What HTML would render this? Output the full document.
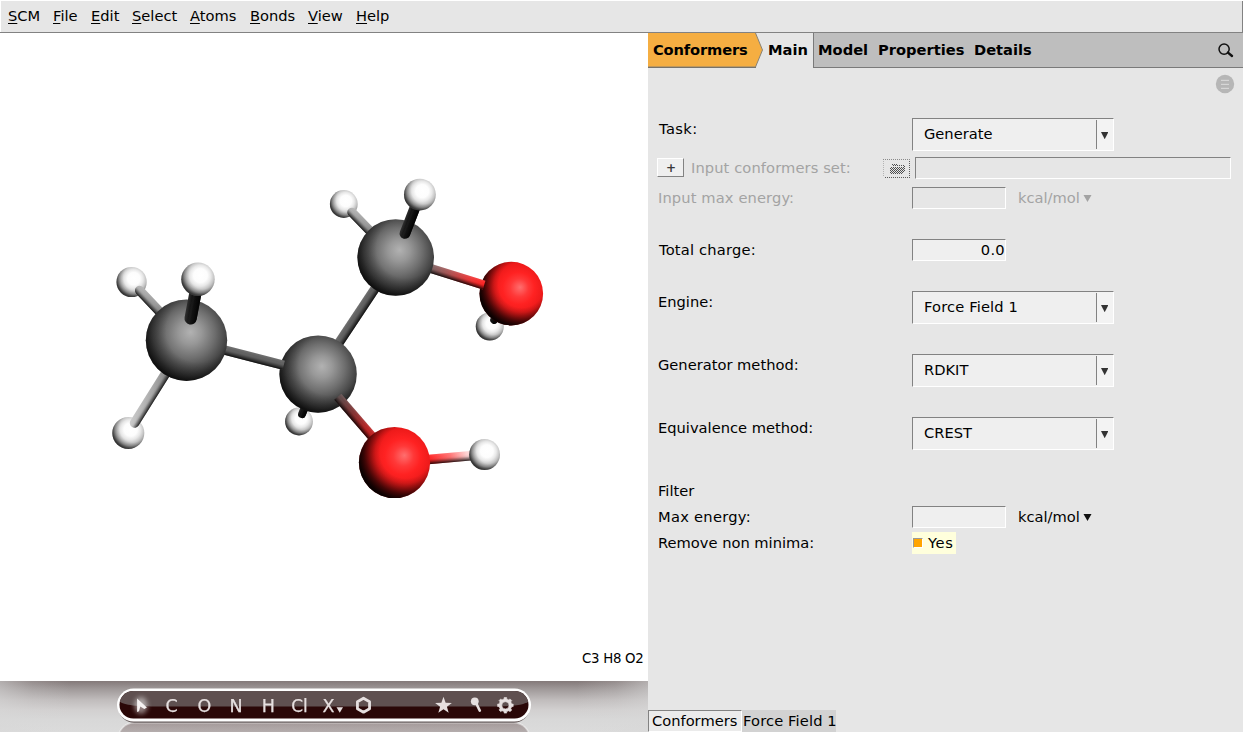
<!DOCTYPE html>
<html><head><meta charset="utf-8"><title>AMSinput</title>
<style>
html,body{margin:0;padding:0;}
body{width:1243px;height:732px;position:relative;overflow:hidden;background:#e6e6e6;font-family:"DejaVu Sans","Liberation Sans",sans-serif;font-size:14.667px;color:#000;}
.abs{position:absolute;white-space:nowrap;}
#menubar{left:0;top:0;width:1243px;height:32px;background:#e6e6e6;border-bottom:1px solid #828282;box-sizing:content-box;}
#menubar:before{content:"";position:absolute;left:0;top:0;width:1243px;height:1px;background:#fff;}
#menubar:after{content:"";position:absolute;left:0;top:0;width:1px;height:32px;background:#fff;}
#mbr{left:1242px;top:1px;width:1px;height:32px;background:#828282;}
.mi{position:absolute;top:7px;line-height:17px;}
.mi u{text-decoration:underline;text-underline-offset:2px;}
#canvas{left:0;top:33px;width:648px;height:648px;background:#fff;}
#tbar{left:0;top:681px;width:648px;height:51px;background:linear-gradient(#837979 0%,#a39d9d 18%,#c0bcbc 37%,#d2d0d0 57%,#d8d8d8 76%,#dbdbdb 100%);}
#panel{left:648px;top:33px;width:595px;height:699px;background:#e6e6e6;}
.lbl{position:absolute;line-height:17px;white-space:nowrap;}
.dis{color:#a3a3a3;}
.b{font-weight:bold;}

.combo{position:absolute;left:912px;width:202px;height:33px;box-sizing:border-box;background:#efefef;border-top:1px solid #828282;border-left:1px solid #828282;border-right:1px solid #fff;border-bottom:1px solid #fff;}
.combo span{position:absolute;left:11px;top:6px;line-height:17px;white-space:nowrap;}
.combo:after{content:"";position:absolute;left:184px;top:0;width:16px;height:31px;background:#f3f3f3;}
.combo b{z-index:2;}
.combo i{position:absolute;left:183px;top:1px;width:1px;height:29px;background:#828282;}
.combo b{position:absolute;left:188px;top:13px;width:7.4px;height:7.2px;background:#333;clip-path:polygon(0 0,100% 0,50% 100%);}
.entry{position:absolute;box-sizing:border-box;background:#efefef;border-top:1px solid #828282;border-left:1px solid #828282;border-right:1px solid #fff;border-bottom:1px solid #fff;}
.dise{background:#e6e6e6;}
.btn{box-sizing:border-box;background:#efefef;border-top:1px solid #fff;border-left:1px solid #fff;border-right:1px solid #828282;border-bottom:1px solid #828282;}
.btn span{position:absolute;left:0;right:0;top:1px;text-align:center;font-weight:bold;line-height:17px;color:#3a3a3a;font-size:12px;padding-left:1px;}
</style></head><body>
<div id="menubar" class="abs">
<span class="mi" style="left:8px"><u>S</u>CM</span>
<span class="mi" style="left:53px"><u>F</u>ile</span>
<span class="mi" style="left:91px"><u>E</u>dit</span>
<span class="mi" style="left:132px"><u>S</u>elect</span>
<span class="mi" style="left:190px"><u>A</u>toms</span>
<span class="mi" style="left:250px"><u>B</u>onds</span>
<span class="mi" style="left:308px"><u>V</u>iew</span>
<span class="mi" style="left:356px"><u>H</u>elp</span>
</div>
<div id="mbr" class="abs"></div>
<div id="canvas" class="abs"></div>
<div id="tbar" class="abs"><div style="position:absolute;left:0;top:0;width:648px;height:51px;background:linear-gradient(to right,rgba(216,216,216,.55) 0,rgba(216,216,216,.2) 5%,rgba(216,216,216,0) 11%,rgba(216,216,216,0) 89%,rgba(216,216,216,.2) 95%,rgba(216,216,216,.55) 100%);"></div></div>
<div id="panel" class="abs"></div>

<!-- tab bar -->
<div class="abs" style="left:648px;top:33px;width:595px;height:34px;background:#bebebe;border-bottom:1px solid #7a7a7a;"></div>
<div class="abs" style="left:648px;top:33px;width:165px;height:35px;background:#e6e6e6;border-right:1px solid #7a7a7a;"></div>
<svg class="abs" style="left:648px;top:33px" width="120" height="35" viewBox="0 0 120 35">
<polygon points="0,0 107.5,0 114.5,17 107.5,34 0,34" fill="#f5ae42"/>
<polyline points="107.5,0 114.5,17 107.5,34 0,34" fill="none" stroke="#8a8374" stroke-width="1"/>
</svg>
<div class="abs" style="left:648px;top:67px;width:108px;height:1px;background:#77736a;"></div>
<span class="lbl b" style="left:653px;top:41px;letter-spacing:-0.15px;">Conformers</span>
<span class="lbl b" style="left:768px;top:41px;">Main</span>
<span class="lbl b" style="left:818px;top:41px;">Model</span>
<span class="lbl b" style="left:878px;top:41px;">Properties</span>
<span class="lbl b" style="left:974px;top:41px;">Details</span>
<svg class="abs" style="left:1213px;top:38px" width="24" height="24" viewBox="0 0 24 24">
<circle cx="11.1" cy="11.1" r="5.1" fill="none" stroke="#111" stroke-width="1.5"/>
<line x1="15" y1="14.6" x2="19" y2="18" stroke="#111" stroke-width="2.4" stroke-linecap="round"/>
</svg>
<svg class="abs" style="left:1214px;top:73px" width="22" height="22" viewBox="0 0 22 22">
<circle cx="11" cy="11" r="9.2" fill="#b6b6b6"/>
<g stroke="#d6d6d6" stroke-width="1.2"><line x1="7" y1="7.4" x2="15" y2="7.4"/><line x1="7" y1="11.4" x2="15" y2="11.4"/><line x1="7" y1="15.4" x2="15" y2="15.4"/></g>
</svg>

<!-- rows -->
<span class="lbl" style="left:659px;top:120px;letter-spacing:0.4px;">Task:</span>
<div class="combo" style="top:118px;"><span>Generate</span><i></i><b></b></div>

<div class="btn abs" style="left:657px;top:158px;width:27px;height:19px;"><span>+</span></div>
<span class="lbl dis" style="left:691px;top:159px;letter-spacing:0.1px;">Input conformers set:</span>
<svg class="abs" style="left:880px;top:156px" width="34" height="26" viewBox="880 156 34 26" shape-rendering="crispEdges">
<defs>
<pattern id="stipA" width="2" height="2" patternUnits="userSpaceOnUse"><rect x="0" y="0" width="1" height="1" fill="#8a8a8a"/><rect x="1" y="1" width="1" height="1" fill="#8a8a8a"/></pattern>
<pattern id="stipB" width="2" height="2" patternUnits="userSpaceOnUse"><rect x="0" y="0" width="1" height="1" fill="#b4b4b4"/><rect x="1" y="1" width="1" height="1" fill="#b4b4b4"/></pattern>
<pattern id="stipC" width="2" height="2" patternUnits="userSpaceOnUse"><rect x="0" y="0" width="1" height="1" fill="#5c5c5c"/><rect x="1" y="1" width="1" height="1" fill="#5c5c5c"/></pattern>
<pattern id="stipD" width="2" height="2" patternUnits="userSpaceOnUse"><rect x="0" y="0" width="1" height="1" fill="#4e4e4e"/><rect x="1" y="1" width="1" height="1" fill="#4e4e4e"/></pattern>
</defs>
<rect x="883" y="159" width="27" height="1" fill="url(#stipA)"/>
<rect x="883" y="160" width="1" height="17" fill="url(#stipB)"/>
<rect x="909" y="160" width="1" height="18" fill="url(#stipC)"/>
<rect x="884" y="177" width="25" height="1" fill="url(#stipC)"/>
<rect x="892" y="164" width="6" height="2" fill="url(#stipD)"/>
<rect x="898" y="165" width="6" height="1" fill="url(#stipD)"/>
<rect x="890" y="167" width="13" height="6" fill="url(#stipD)"/>
<rect x="891" y="173" width="11" height="1" fill="url(#stipD)"/>
<rect x="903" y="166" width="2" height="6" fill="url(#stipD)"/>
</svg>
<div class="entry dise" style="left:915px;top:157px;width:316px;height:22px;"></div>

<span class="lbl dis" style="left:658px;top:189px;letter-spacing:0.12px;">Input max energy:</span>
<div class="entry dise" style="left:912px;top:187px;width:94px;height:22px;"></div>
<span class="lbl dis" style="left:1018px;top:189px;">kcal/mol</span>
<svg class="abs" style="left:1083px;top:194px" width="9" height="9" viewBox="0 0 9 9"><polygon points="0.5,1 8.5,1 4.5,8" fill="#a3a3a3"/></svg>

<span class="lbl" style="left:659px;top:241px;letter-spacing:0.2px;">Total charge:</span>
<div class="entry" style="left:912px;top:239px;width:94px;height:22px;"><span class="lbl" style="right:0px;top:1px;letter-spacing:0.3px;">0.0</span></div>

<span class="lbl" style="left:658px;top:293px;">Engine:</span>
<div class="combo" style="top:291px;"><span style="letter-spacing:0.15px">Force Field 1</span><i></i><b></b></div>

<span class="lbl" style="left:658px;top:356px;">Generator method:</span>
<div class="combo" style="top:354px;"><span>RDKIT</span><i></i><b></b></div>

<span class="lbl" style="left:658px;top:419px;">Equivalence method:</span>
<div class="combo" style="top:417px;"><span>CREST</span><i></i><b></b></div>

<span class="lbl" style="left:658px;top:482px;">Filter</span>
<span class="lbl" style="left:658px;top:508px;letter-spacing:0.27px;">Max energy:</span>
<div class="entry" style="left:912px;top:506px;width:94px;height:22px;"></div>
<span class="lbl" style="left:1018px;top:508px;">kcal/mol</span>
<svg class="abs" style="left:1083px;top:513px" width="9" height="9" viewBox="0 0 9 9"><polygon points="0.5,1 8.5,1 4.5,8" fill="#111"/></svg>
<span class="lbl" style="left:658px;top:534px;">Remove non minima:</span>
<div class="abs" style="left:912px;top:532px;width:44px;height:22px;background:#ffffdc;"></div>
<div class="abs" style="left:913px;top:538px;width:10px;height:10px;box-sizing:border-box;background:#ffa500;border-left:1px solid #9a9a9a;border-top:1px solid #9a9a9a;border-right:1px solid #fff;border-bottom:1px solid #fff;"></div>
<span class="lbl" style="left:928px;top:534px;letter-spacing:0.6px;">Yes</span>

<!-- bottom tabs -->
<div class="abs" style="left:648px;top:710px;width:94px;height:22px;box-sizing:border-box;background:#ebebeb;border-left:1px solid #828282;border-top:1px solid #828282;border-right:1px solid #fff;border-bottom:1px solid #fff;"></div>
<span class="lbl" style="left:652px;top:712px;">Conformers</span>
<div class="abs" style="left:742px;top:710px;width:94px;height:22px;background:#d2d2d2;"></div>
<span class="lbl" style="left:743px;top:712px;letter-spacing:0.13px;">Force Field 1</span>
<span class="lbl" style="left:582px;top:650px;font-size:13.33px;letter-spacing:-0.28px">C3 H8 O2</span>


<svg class="abs" style="left:100px;top:681px" width="448" height="51" viewBox="100 681 448 51">
<defs>
<clipPath id="pillclip"><rect x="119.5" y="691" width="409" height="27.6" rx="13.8"/></clipPath>
<linearGradient id="refl" x1="0" y1="0" x2="0" y2="1"><stop offset="0" stop-color="#2a0707" stop-opacity="0.30"/><stop offset="0.35" stop-color="#2a0707" stop-opacity="0.2"/></linearGradient>
<filter id="sblur" x="-5%" y="-50%" width="110%" height="200%"><feGaussianBlur stdDeviation="0.7"/></filter>
</defs>
<rect x="118" y="722.6" width="412" height="33" rx="16.5" fill="url(#refl)" stroke="#fff" stroke-opacity="0.45" stroke-width="1.6"/>
<rect x="118" y="690.4" width="412" height="32.4" rx="16.2" fill="#3a2c2c" opacity="0.75" filter="url(#sblur)"/>
<rect x="117" y="688.6" width="414" height="33" rx="16.5" fill="#fff"/>
<rect x="119.5" y="691" width="409" height="27.6" rx="13.8" fill="#2a0707"/>
<g clip-path="url(#pillclip)"><path d="M119 690 H529 V700 C529 704 515 706.4 497 706.4 H151 C133 706.4 119 704 119 700 Z" fill="#5f5050"/></g>
</svg>
<svg class="abs" style="left:117px;top:688px;will-change:transform" width="414" height="34" viewBox="117 688 414 34">
<defs><filter id="glow" x="-100%" y="-100%" width="300%" height="300%"><feGaussianBlur stdDeviation="2.6"/></filter></defs>
<ellipse cx="141" cy="705.5" rx="6.5" ry="8.5" fill="#fff" opacity="0.5" filter="url(#glow)"/>
<path d="M137.1 698.6 L137.1 711.9 L139 711.3 L140.3 706.5 L144.3 708.9 L146.9 707.6 Z" fill="#f6f2f2"/>
<g fill="#e6dfdf" stroke="#e6dfdf" stroke-width="0.25" font-family="'DejaVu Sans','Liberation Sans',sans-serif" font-size="17.5" text-anchor="middle">
<text x="171.6" y="711.7">C</text>
<text x="204.3" y="711.7">O</text>
<text x="236.1" y="711.7">N</text>
<text x="268.3" y="711.7">H</text>
<text x="299.4" y="711.7" textLength="16.5" lengthAdjust="spacingAndGlyphs">Cl</text>
<text x="328.4" y="711.7">X</text>
</g>
<polygon points="336.5,707.3 343,707.3 339.75,712.8" fill="#e6dfdf"/>
<polygon points="363.50,698.20 369.56,701.70 369.56,708.70 363.50,712.20 357.44,708.70 357.44,701.70" fill="none" stroke="#e6dfdf" stroke-width="2.8" stroke-linejoin="round"/>
<polygon points="443.50,696.80 445.62,702.69 451.87,702.88 446.92,706.71 448.67,712.72 443.50,709.20 438.33,712.72 440.08,706.71 435.13,702.88 441.38,702.69" fill="#e6dfdf"/>
<circle cx="474.8" cy="701.3" r="3.9" fill="#e6dfdf"/>
<line x1="475.5" y1="702" x2="479.8" y2="710.6" stroke="#e6dfdf" stroke-width="2.6" stroke-linecap="round"/>
<path d="M513.20,704.06 L513.20,706.54 L511.66,706.65 L510.78,708.77 L511.79,709.94 L510.04,711.69 L508.87,710.68 L506.75,711.56 L506.64,713.10 L504.16,713.10 L504.05,711.56 L501.93,710.68 L500.76,711.69 L499.01,709.94 L500.02,708.77 L499.14,706.65 L497.60,706.54 L497.60,704.06 L499.14,703.95 L500.02,701.83 L499.01,700.66 L500.76,698.91 L501.93,699.92 L504.05,699.04 L504.16,697.50 L506.64,697.50 L506.75,699.04 L508.87,699.92 L510.04,698.91 L511.79,700.66 L510.78,701.83 L511.66,703.95Z M509.0 705.3 A3.6 3.6 0 1 0 501.8 705.3 A3.6 3.6 0 1 0 509.0 705.3 Z" fill="#e6dfdf" fill-rule="evenodd" stroke="#e6dfdf" stroke-width="0.6" stroke-linejoin="round"/>
</svg>

<!--MOL--><svg class="abs" style="left:0;top:33px" width="648" height="648" viewBox="0 33 648 648"><defs><radialGradient id="gC" cx="0.53" cy="0.43" r="0.56" fx="0.55" fy="0.40">
<stop offset="0" stop-color="#b2b2b2"/><stop offset="0.25" stop-color="#989898"/><stop offset="0.55" stop-color="#6e6e6e"/><stop offset="0.8" stop-color="#464646"/><stop offset="0.93" stop-color="#2e2e2e"/><stop offset="1" stop-color="#1e1e1e"/></radialGradient>
<radialGradient id="gO" cx="0.58" cy="0.44" r="0.60" fx="0.64" fy="0.40">
<stop offset="0" stop-color="#ff6e6e"/><stop offset="0.1" stop-color="#ff5858"/><stop offset="0.24" stop-color="#ff3838"/><stop offset="0.42" stop-color="#ff2222"/><stop offset="0.66" stop-color="#ee1a1a"/><stop offset="0.84" stop-color="#c81212"/><stop offset="0.95" stop-color="#960c0c"/><stop offset="1" stop-color="#620606"/></radialGradient>
<radialGradient id="gH" cx="0.56" cy="0.41" r="0.57" fx="0.58" fy="0.38">
<stop offset="0" stop-color="#ffffff"/><stop offset="0.36" stop-color="#fdfdfd"/><stop offset="0.55" stop-color="#e8e8e8"/><stop offset="0.72" stop-color="#c6c6c6"/><stop offset="0.86" stop-color="#9c9c9c"/><stop offset="1" stop-color="#5c5c5c"/></radialGradient>
<radialGradient id="dk" cx="0.66" cy="0.36" r="0.86"><stop offset="0" stop-color="#000" stop-opacity="0"/><stop offset="0.42" stop-color="#000" stop-opacity="0"/><stop offset="0.5" stop-color="#000" stop-opacity="0.14"/><stop offset="0.59" stop-color="#000" stop-opacity="0.4"/><stop offset="0.68" stop-color="#000" stop-opacity="0.68"/><stop offset="0.78" stop-color="#000" stop-opacity="0.9"/><stop offset="0.88" stop-color="#000" stop-opacity="1"/></radialGradient>
<radialGradient id="dkC" cx="0.64" cy="0.38" r="0.86"><stop offset="0" stop-color="#000" stop-opacity="0"/><stop offset="0.45" stop-color="#000" stop-opacity="0"/><stop offset="0.65" stop-color="#000" stop-opacity="0.25"/><stop offset="0.8" stop-color="#000" stop-opacity="0.55"/><stop offset="0.9" stop-color="#000" stop-opacity="0.7"/></radialGradient>
<radialGradient id="dkH" cx="0.66" cy="0.36" r="0.86"><stop offset="0" stop-color="#000" stop-opacity="0"/><stop offset="0.5" stop-color="#000" stop-opacity="0"/><stop offset="0.65" stop-color="#000" stop-opacity="0.15"/><stop offset="0.78" stop-color="#000" stop-opacity="0.4"/><stop offset="0.9" stop-color="#000" stop-opacity="0.65"/></radialGradient>
<linearGradient id="shade" x1="0" y1="0" x2="0" y2="1"><stop offset="0" stop-color="#fff" stop-opacity="0.12"/><stop offset="0.3" stop-color="#fff" stop-opacity="0.02"/><stop offset="0.55" stop-color="#000" stop-opacity="0.1"/><stop offset="0.8" stop-color="#000" stop-opacity="0.5"/><stop offset="1" stop-color="#000" stop-opacity="0.85"/></linearGradient>
<linearGradient id="shadeR" x1="0" y1="1" x2="0" y2="0"><stop offset="0" stop-color="#fff" stop-opacity="0.12"/><stop offset="0.3" stop-color="#fff" stop-opacity="0.02"/><stop offset="0.55" stop-color="#000" stop-opacity="0.1"/><stop offset="0.8" stop-color="#000" stop-opacity="0.5"/><stop offset="1" stop-color="#000" stop-opacity="0.85"/></linearGradient>
<linearGradient id="b1" x1="0" y1="0" x2="1" y2="0"><stop offset="0" stop-color="#b4b4b4"/><stop offset="0.35" stop-color="#989898"/><stop offset="0.6" stop-color="#747474"/><stop offset="1" stop-color="#5a5a5a"/></linearGradient>
<linearGradient id="b2" x1="0" y1="0" x2="1" y2="0"><stop offset="0" stop-color="#c8c8c8"/><stop offset="0.4" stop-color="#a8a8a8"/><stop offset="0.7" stop-color="#848484"/><stop offset="1" stop-color="#686868"/></linearGradient>
<linearGradient id="b3" x1="0" y1="0" x2="1" y2="0"><stop offset="0" stop-color="#b4b4b4"/><stop offset="0.35" stop-color="#989898"/><stop offset="0.6" stop-color="#747474"/><stop offset="1" stop-color="#5a5a5a"/></linearGradient>
<linearGradient id="b4" x1="0" y1="0" x2="1" y2="0"><stop offset="0" stop-color="#0c0c0c"/><stop offset="1" stop-color="#141414"/></linearGradient>
<linearGradient id="b5" x1="0" y1="0" x2="1" y2="0"><stop offset="0" stop-color="#0a0a0a"/><stop offset="1" stop-color="#120808"/></linearGradient>
<linearGradient id="b6" x1="0" y1="0" x2="1" y2="0"><stop offset="0" stop-color="#5e5e5e"/><stop offset="1" stop-color="#5e5e5e"/></linearGradient>
<linearGradient id="b7" x1="0" y1="0" x2="1" y2="0"><stop offset="0" stop-color="#6a6060"/><stop offset="0.41" stop-color="#806262"/><stop offset="0.59" stop-color="#a85252"/><stop offset="0.72" stop-color="#cc4040"/><stop offset="0.86" stop-color="#f03030"/><stop offset="1" stop-color="#ff2020"/></linearGradient>
<linearGradient id="b8" x1="0" y1="0" x2="1" y2="0"><stop offset="0" stop-color="#5e5e5e"/><stop offset="1" stop-color="#5e5e5e"/></linearGradient>
<linearGradient id="b9" x1="0" y1="0" x2="1" y2="0"><stop offset="0" stop-color="#5a4a4a"/><stop offset="0.25" stop-color="#803030"/><stop offset="0.5" stop-color="#b82020"/><stop offset="1" stop-color="#e01818"/></linearGradient>
<linearGradient id="b10" x1="0" y1="0" x2="1" y2="0"><stop offset="0" stop-color="#ff2020"/><stop offset="0.4" stop-color="#ff2424"/><stop offset="0.62" stop-color="#ff7070"/><stop offset="0.8" stop-color="#ffd0d0"/><stop offset="1" stop-color="#f4f4f4"/></linearGradient>
<linearGradient id="b11" x1="0" y1="0" x2="1" y2="0"><stop offset="0" stop-color="#161616"/><stop offset="1" stop-color="#0c0c0c"/></linearGradient>
<linearGradient id="b12" x1="0" y1="0" x2="1" y2="0"><stop offset="0" stop-color="#161616"/><stop offset="1" stop-color="#0c0c0c"/></linearGradient></defs>
<circle cx="131.6" cy="282" r="15.1" fill="url(#gH)"/><circle cx="131.6" cy="282" r="15.1" fill="url(#dkH)"/>
<g transform="translate(136.40,287.09) rotate(46.67)"><rect x="0" y="-4.7" width="73.01" height="9.4" fill="url(#b1)" rx="4.7"/><rect x="0" y="-4.7" width="73.01" height="9.4" fill="url(#shade)" rx="4.7"/></g>
<circle cx="128.3" cy="433" r="16" fill="url(#gH)"/><circle cx="128.3" cy="433" r="16" fill="url(#dkH)"/>
<g transform="translate(132.02,427.07) rotate(-57.91)"><rect x="0" y="-4.8" width="102.54" height="9.6" fill="url(#b2)" rx="4.8"/><rect x="0" y="-4.8" width="102.54" height="9.6" fill="url(#shade)" rx="4.8"/></g>
<circle cx="343.8" cy="204" r="13.9" fill="url(#gH)"/><circle cx="343.8" cy="204" r="13.9" fill="url(#dkH)"/>
<g transform="translate(348.67,209.02) rotate(45.87)"><rect x="0" y="-4.6" width="67.54" height="9.2" fill="url(#b3)" rx="4.6"/><rect x="0" y="-4.6" width="67.54" height="9.2" fill="url(#shade)" rx="4.6"/></g>
<circle cx="299" cy="421.5" r="13.9" fill="url(#gH)"/><circle cx="299" cy="421.5" r="13.9" fill="url(#dkH)"/>
<g transform="translate(300.50,417.79) rotate(-68.05)"><rect x="0" y="-3.9" width="47.10" height="7.8" fill="url(#b4)" rx="3.9"/><rect x="0" y="-3.9" width="47.10" height="7.8" fill="url(#shade)" rx="3.9"/></g>
<circle cx="489.8" cy="326.5" r="14" fill="url(#gH)"/><circle cx="489.8" cy="326.5" r="14" fill="url(#dkH)"/>
<g transform="translate(491.99,323.15) rotate(-56.84)"><rect x="0" y="-3.9" width="35.30" height="7.8" fill="url(#b5)" rx="3.9"/><rect x="0" y="-3.9" width="35.30" height="7.8" fill="url(#shade)" rx="3.9"/></g>
<g transform="translate(318.10,374.10) rotate(-56.36)"><rect x="0" y="-4.7" width="140.06" height="9.4" fill="url(#b6)"/><rect x="0" y="-4.7" width="140.06" height="9.4" fill="url(#shade)"/></g>
<circle cx="511.3" cy="293.6" r="31.8" fill="url(#gO)"/><circle cx="511.3" cy="293.6" r="31.8" fill="url(#dk)"/>
<g transform="translate(395.70,257.50) rotate(17.34)"><rect x="0" y="-4.5" width="92.61" height="9.0" fill="url(#b7)"/><rect x="0" y="-4.5" width="92.61" height="9.0" fill="url(#shade)"/></g>
<circle cx="318.1" cy="374.1" r="38.7" fill="url(#gC)"/><circle cx="318.1" cy="374.1" r="38.7" fill="url(#dkC)"/>
<g transform="translate(186.50,340.20) rotate(14.45)"><rect x="0" y="-4.7" width="100.40" height="9.4" fill="url(#b8)"/><rect x="0" y="-4.7" width="100.40" height="9.4" fill="url(#shade)"/></g>
<circle cx="186.5" cy="340.2" r="40.7" fill="url(#gC)"/><circle cx="186.5" cy="340.2" r="40.7" fill="url(#dkC)"/>
<circle cx="395.7" cy="257.5" r="38.3" fill="url(#gC)"/><circle cx="395.7" cy="257.5" r="38.3" fill="url(#dkC)"/>
<g transform="translate(337.72,396.80) rotate(49.16)"><rect x="0" y="-4.7" width="86.84" height="9.4" fill="url(#b9)"/><rect x="0" y="-4.7" width="86.84" height="9.4" fill="url(#shade)"/></g>
<g transform="translate(394.50,462.50) rotate(-5.07)"><rect x="0" y="-4.8" width="90.45" height="9.6" fill="url(#b10)"/><rect x="0" y="-4.8" width="90.45" height="9.6" fill="url(#shade)"/></g>
<circle cx="394.5" cy="462.5" r="35.6" fill="url(#gO)"/><circle cx="394.5" cy="462.5" r="35.6" fill="url(#dk)"/>
<circle cx="484.6" cy="454.5" r="15.4" fill="url(#gH)"/><circle cx="484.6" cy="454.5" r="15.4" fill="url(#dkH)"/>
<g transform="translate(189.48,324.40) rotate(-79.32)"><rect x="0" y="-6.1" width="46.00" height="12.2" fill="url(#b11)" rx="6.1"/><rect x="0" y="-6.1" width="46.00" height="12.2" fill="url(#shade)" rx="6.1"/></g>
<circle cx="198" cy="279.2" r="16.7" fill="url(#gH)"/><circle cx="198" cy="279.2" r="16.7" fill="url(#dkH)"/>
<g transform="translate(403.02,238.47) rotate(-68.96)"><rect x="0" y="-5.3" width="47.00" height="10.6" fill="url(#b12)" rx="5.3"/><rect x="0" y="-5.3" width="47.00" height="10.6" fill="url(#shade)" rx="5.3"/></g>
<circle cx="419.9" cy="194.6" r="15.9" fill="url(#gH)"/><circle cx="419.9" cy="194.6" r="15.9" fill="url(#dkH)"/>
</svg><!--/MOL-->
<!--CANVAS-->
</body></html>
